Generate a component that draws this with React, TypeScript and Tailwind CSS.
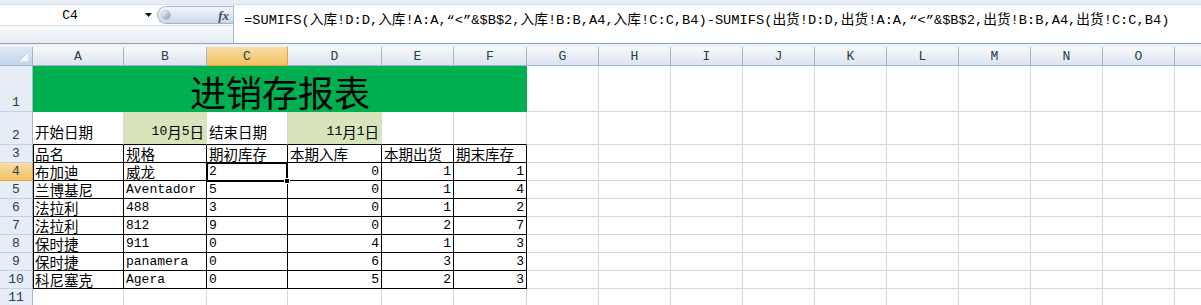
import React from "react";

const MONO =
  "inline-block font-[family-name:'Liberation_Mono','Noto_Sans_CJK_SC',monospace] text-[13px] leading-[17px]";
const CJK =
  "inline-block font-[family-name:'Noto_Sans_CJK_SC',sans-serif] text-[14.5px] leading-[17px]";

const GRIDCELL = "border-r border-b border-[#d0d7e5]";
const TABLECELL = "border-r border-b border-black";

const COLS = ["A", "B", "C", "D", "E", "F", "G", "H", "I", "J", "K", "L", "M", "N", "O", ""];
const EXTRA = ["G", "H", "I", "J", "K", "L", "M", "N", "O", "P"];

const FORMULA =
  "=SUMIFS(入库!D:D,入库!A:A,“<”&$B$2,入库!B:B,A4,入库!C:C,B4)-SUMIFS(出货!D:D,出货!A:A,“<”&$B$2,出货!B:B,A4,出货!C:C,B4)";

type Row = [string, string, string, number, number, number];
const DATA: Row[] = [
  ["布加迪", "威龙", "2", 0, 1, 1],
  ["兰博基尼", "Aventador", "5", 0, 1, 4],
  ["法拉利", "488", "3", 0, 1, 2],
  ["法拉利", "812", "9", 0, 2, 7],
  ["保时捷", "911", "0", 4, 1, 3],
  ["保时捷", "panamera", "0", 6, 3, 3],
  ["科尼塞克", "Agera", "0", 5, 2, 3],
];

const isCjk = (s: string) => /[\u4e00-\u9fff]/.test(s);

function ColHeader({ l }: { l: string }) {
  const sel = l === "C";
  return (
    <div
      className={
        sel
          ? "flex items-center justify-center border-r border-b border-[#f29b3a] bg-linear-to-b from-[#f9dca6] to-[#f1c260]"
          : "flex items-center justify-center border-r border-b border-[#9eb6ce] bg-linear-to-b from-[#f7f9fc] to-[#dbe4f0]"
      }
    >
      {l && <span className={`${MONO} text-[#27413e]`}>{l}</span>}
    </div>
  );
}

function RowHeader({ n }: { n: number }) {
  const sel = n === 4;
  return (
    <div
      className={
        sel
          ? "flex items-end justify-center border-r border-b border-[#f29b3a] bg-linear-to-b from-[#f9dca6] to-[#f1c260]"
          : "flex items-end justify-center border-r border-b border-r-[#9eb6ce] border-b-[#c3d1e2] bg-[#e6edf6]"
      }
    >
      <span className={`${MONO} text-[#27413e]`}>{n}</span>
    </div>
  );
}

function Blank() {
  return <div className={GRIDCELL} />;
}

function Txt({ s }: { s: string }) {
  return <span className={isCjk(s) ? CJK : MONO}>{s}</span>;
}

function Cell({
  children,
  right,
  cls,
}: {
  children?: React.ReactNode;
  right?: boolean;
  cls: string;
}) {
  return (
    <div
      className={`flex items-end overflow-visible whitespace-nowrap px-[2px] text-black ${
        right ? "justify-end" : "justify-start"
      } ${cls}`}
    >
      {children}
    </div>
  );
}

export default function App() {
  return (
    <div className="w-[1201px] h-[305px] overflow-hidden bg-white select-none">
      {/* formula bar */}
      <div className="h-[5px] bg-[#e7eef7] border-b border-[#d3deec]" />
      <div className="h-[38px] flex">
        <div className="w-[234px] flex flex-col border-r border-[#a9bcd5]">
          <div className="h-[20px] flex bg-white">
            <div className="w-[140px] flex items-center justify-center">
              <span className={`${MONO} text-black`}>C4</span>
            </div>
            <div className="w-[17px] flex items-center justify-center">
              <svg width="7" height="4" viewBox="0 0 7 4">
                <path d="M0 0 L7 0 L3.5 4 Z" fill="#111" />
              </svg>
            </div>
            <div className="flex-1 flex items-center">
              <div className="h-[18px] w-full rounded-l-full border border-r-0 border-[#9fb3cf] bg-linear-to-b from-[#f4f7fb] to-[#c9d7ea] flex items-center justify-between pl-[3px] pr-[4px]">
                <div className="w-[10px] h-[10px] rounded-full bg-linear-to-br from-[#ffffff] to-[#8e98a6] border border-[#b5bfcc]" />
                <span className="font-[family-name:'Liberation_Serif',serif] italic font-bold text-[13px] leading-none text-[#4a4a4a]">
                  fx
                </span>
              </div>
            </div>
          </div>
          <div className="flex-1 bg-linear-to-b from-[#f8fafc] to-[#e6ebf2] border-t border-[#dbe2ec]" />
        </div>
        <div className="flex-1 bg-white pl-[10px] pt-[1px] overflow-hidden whitespace-nowrap">
          <span className="font-[family-name:'Liberation_Mono','Noto_Sans_CJK_SC',monospace] text-[13.7px] leading-[19px] text-black">
            {FORMULA}
          </span>
        </div>
      </div>
      <div className="h-[1px] bg-[#8fa2bd]" />
      <div className="h-[3px] bg-[#eef2f8]" />

      {/* sheet */}
      <div className="grid grid-cols-[33px_91px_83px_81px_94px_72px_73px_repeat(10,72px)] grid-rows-[19px_46px_33px_repeat(9,18px)]">
        {/* column headers */}
        <div className="relative border-r border-b border-[#9eb6ce] bg-linear-to-b from-[#dfe8f5] to-[#c4d5ec]">
          <svg className="absolute right-[3px] bottom-[3px]" width="11" height="11" viewBox="0 0 11 11">
            <path d="M11 0 L11 11 L0 11 Z" fill="#f3f6fa" stroke="#a9b8cb" strokeWidth="0.6" />
          </svg>
        </div>
        {COLS.map((c, i) => (
          <ColHeader key={"h" + i} l={c} />
        ))}

        {/* row 1 */}
        <RowHeader n={1} />
        <div className="col-span-6 flex items-center justify-center bg-[#00b050] border-b border-[#00b050]">
          <span className="font-[family-name:'Noto_Sans_CJK_SC',sans-serif] text-[36px] leading-none pt-[4px] text-black">
            进销存报表
          </span>
        </div>
        {EXTRA.map((c) => (
          <Blank key={"r1" + c} />
        ))}

        {/* row 2 */}
        <RowHeader n={2} />
        <Cell cls="border-r border-b border-r-[#d0d7e5] border-b-black pb-[4px]">
          <span className={CJK}>开始日期</span>
        </Cell>
        <Cell right cls="bg-[#d8e4bc] border-r border-b border-r-[#d8e4bc] border-b-black pb-[4px]">
          <span className={MONO}>10</span>
          <span className={CJK}>月</span>
          <span className={MONO}>5</span>
          <span className={CJK}>日</span>
        </Cell>
        <Cell cls="border-r border-b border-r-[#d0d7e5] border-b-black pb-[4px]">
          <span className={CJK}>结束日期</span>
        </Cell>
        <Cell right cls="bg-[#d8e4bc] border-r border-b border-r-[#d8e4bc] border-b-black pb-[4px]">
          <span className={MONO}>11</span>
          <span className={CJK}>月</span>
          <span className={MONO}>1</span>
          <span className={CJK}>日</span>
        </Cell>
        <Cell cls="border-r border-b border-r-[#d0d7e5] border-b-black" />
        <Cell cls="border-r border-b border-r-[#d0d7e5] border-b-black" />
        {EXTRA.map((c) => (
          <Blank key={"r2" + c} />
        ))}

        {/* row 3 */}
        <RowHeader n={3} />
        {["品名", "规格", "期初库存", "本期入库", "本期出货", "期末库存"].map((h, i) => (
          <Cell key={h} cls={i === 0 ? `${TABLECELL} shadow-[inset_1px_0_0_#000]` : TABLECELL}>
            <Txt s={h} />
          </Cell>
        ))}
        {EXTRA.map((c) => (
          <Blank key={"r3" + c} />
        ))}

        {/* data rows */}
        {DATA.map((r, ri) => {
          const n = ri + 4;
          return (
            <React.Fragment key={n}>
              <RowHeader n={n} />
              <Cell cls={`${TABLECELL} shadow-[inset_1px_0_0_#000]`}>
                <Txt s={r[0]} />
              </Cell>
              <Cell cls={TABLECELL}>
                <Txt s={r[1]} />
              </Cell>
              <Cell cls={n === 4 ? `${TABLECELL} relative` : TABLECELL}>
                <Txt s={r[2]} />
                {n === 4 && (
                  <div className="absolute -left-[1px] -top-[1px] w-[82px] h-[20px] border-2 border-black z-10">
                    <div className="absolute right-[-4px] bottom-[-4px] w-[6px] h-[6px] bg-black border border-white" />
                  </div>
                )}
              </Cell>
              <Cell right cls={TABLECELL}>
                <Txt s={String(r[3])} />
              </Cell>
              <Cell right cls={TABLECELL}>
                <Txt s={String(r[4])} />
              </Cell>
              <Cell right cls={TABLECELL}>
                <Txt s={String(r[5])} />
              </Cell>
              {EXTRA.map((c) => (
                <Blank key={"r" + n + c} />
              ))}
            </React.Fragment>
          );
        })}

        {/* row 11 */}
        <RowHeader n={11} />
        {COLS.map((c, i) => (
          <Blank key={"r11" + i} />
        ))}
      </div>
    </div>
  );
}
